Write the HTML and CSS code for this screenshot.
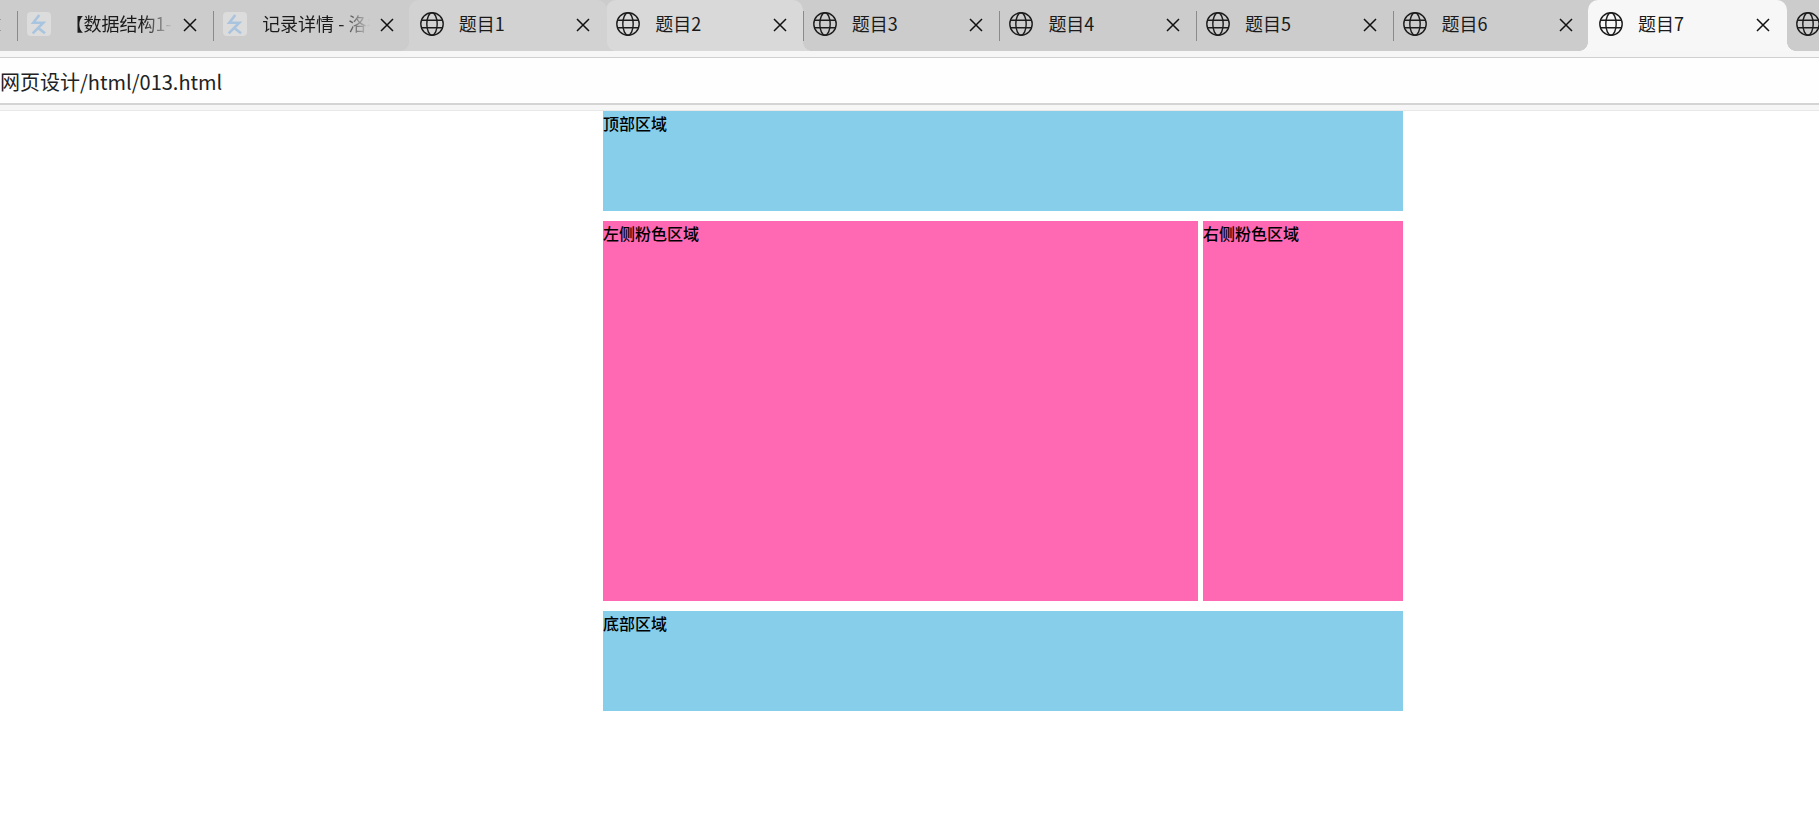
FILE: index.html
```html
<!DOCTYPE html>
<html lang="zh-CN">
<head>
<meta charset="utf-8">
<title>题目7</title>
<link rel="stylesheet" href="styles.css">
</head>
<body>
<svg class="defs" width="0" height="0" aria-hidden="true">
  <symbol id="globe" viewBox="0 0 24 24">
    <g fill="none" stroke="currentColor" stroke-width="1.4">
      <circle cx="12" cy="12" r="11.2"/>
      <ellipse cx="12" cy="12" rx="5.2" ry="11.2"/>
      <path d="M1.6 8.2h20.8M1.6 15.8h20.8"/>
    </g>
  </symbol>
  <symbol id="close" viewBox="0 0 14 14">
    <path d="M1 1l12 12M13 1L1 13" fill="none" stroke="currentColor" stroke-width="1.5"/>
  </symbol>
  <symbol id="fav" viewBox="0 0 24 24">
    <rect width="24" height="24" rx="4" fill="#dcdcdc"/>
    <path d="M12.3 3L6.3 10.7H16.3L5.7 21.3M10.3 15.3L18 21.3" fill="none" stroke="#a9c4de" stroke-width="2.6"/>
  </symbol>
</svg>

<header class="browser">
  <nav class="tabs">
    <div class="tab"><svg class="close push"><use href="#close"/></svg></div>
    <div class="tab sep"><svg class="icon"><use href="#fav"/></svg><span class="title fade">【数据结构1-2 作业</span><svg class="close"><use href="#close"/></svg></div>
    <div class="tab sep"><svg class="icon"><use href="#fav"/></svg><span class="title fade">记录详情 - 洛谷</span><svg class="close"><use href="#close"/></svg></div>
    <div class="tab hover-a"><svg class="icon"><use href="#globe"/></svg><span class="title">题目1</span><svg class="close"><use href="#close"/></svg></div>
    <div class="tab hover-b"><svg class="icon"><use href="#globe"/></svg><span class="title">题目2</span><svg class="close"><use href="#close"/></svg></div>
    <div class="tab sep"><svg class="icon"><use href="#globe"/></svg><span class="title">题目3</span><svg class="close"><use href="#close"/></svg></div>
    <div class="tab sep"><svg class="icon"><use href="#globe"/></svg><span class="title">题目4</span><svg class="close"><use href="#close"/></svg></div>
    <div class="tab sep"><svg class="icon"><use href="#globe"/></svg><span class="title">题目5</span><svg class="close"><use href="#close"/></svg></div>
    <div class="tab sep"><svg class="icon"><use href="#globe"/></svg><span class="title">题目6</span><svg class="close"><use href="#close"/></svg></div>
    <div class="tab active"><svg class="icon"><use href="#globe"/></svg><span class="title">题目7</span><svg class="close"><use href="#close"/></svg></div>
    <div class="tab"><svg class="icon"><use href="#globe"/></svg></div>
  </nav>
  <div class="toolbar">
    <div class="address">网页设计/html/013.html</div>
  </div>
</header>

<main class="page">
  <div class="band">顶部区域</div>
  <div class="middle">
    <div class="pink left">左侧粉色区域</div>
    <div class="pink right">右侧粉色区域</div>
  </div>
  <div class="band">底部区域</div>
</main>
</body>
</html>
```

FILE: styles.css
```css
* {
  box-sizing: border-box;
}

html,
body {
  margin: 0;
  height: 100%;
  overflow: hidden;
  background: #fff;
  font-family: "Noto Sans CJK SC", "Noto Sans", sans-serif;
  color: #000;
}

.defs {
  display: block;
  height: 0;
}

/* browser chrome */
.browser {
  height: 111px;
  display: flex;
  flex-direction: column;
  background: #f6f6f6;
  border-bottom: 1px solid #e8e8e8;
}

.tabs {
  height: 51px;
  flex: none;
  display: flex;
  margin-left: -180px;
  width: 2170px;
  background: #ccc;
}

.tab {
  --tab: #ccc;
  position: relative;
  flex: 0 0 196.57px;
  min-width: 0;
  height: 51px;
  display: flex;
  align-items: center;
  padding: 0 16px 3px 10px;
  background: var(--tab);
  font-size: 18px;
  line-height: 24px;
  color: #1a1a1a;
}

.tab.sep::before {
  content: "";
  position: absolute;
  left: 0;
  top: 11px;
  width: 1px;
  height: 30px;
  background: #8a8a8a;
  z-index: 3;
}

.tab.active,
.tab.hover-a,
.tab.hover-b {
  border-radius: 10px 10px 0 0;
}

.tab.active,
.tab.hover-a {
  flex-basis: 198.57px;
  margin: 0 -1px;
  padding: 0 17px 3px 11px;
  z-index: 2;
}

.tab.active {
  --tab: #f7f7f7;
}

.tab.hover-a {
  --tab: #d2d2d2;
}

.tab.hover-b {
  --tab: #d9d9d9;
  z-index: 1;
}

.tab.active::before,
.tab.active::after,
.tab.hover-a::before,
.tab.hover-a::after,
.tab.hover-b::after {
  content: "";
  position: absolute;
  bottom: 0;
  width: 9px;
  height: 9px;
}

.tab.active::before,
.tab.hover-a::before {
  left: -9px;
  background: radial-gradient(circle at 0 0, transparent 8.6px, var(--tab) 9.2px);
}

.tab.active::after,
.tab.hover-a::after,
.tab.hover-b::after {
  right: -9px;
  background: radial-gradient(circle at 100% 0, transparent 8.6px, var(--tab) 9.2px);
}

.icon {
  flex: none;
  width: 24px;
  height: 24px;
  margin-right: 15px;
  color: #1c1c1c;
}

.title {
  flex: 1 1 0;
  min-width: 0;
  overflow: hidden;
  white-space: nowrap;
  margin-top: -2px;
  padding-bottom: 1px;
}

.title.fade {
  margin-right: 10px;
  -webkit-mask-image: linear-gradient(90deg, #000 72%, transparent 100%);
  mask-image: linear-gradient(90deg, #000 72%, transparent 100%);
}

.close {
  flex: none;
  width: 14px;
  height: 14px;
  margin-top: 2px;
  color: #111;
}

.close.push {
  margin-left: auto;
}

/* address bar */
.toolbar {
  margin-top: 6px;
  height: 48px;
  flex: none;
  background: #fefefe;
  border-top: 1px solid #d0d0d0;
  border-bottom: 2px solid #d4d4d4;
}

.address {
  padding-top: 2px;
  font-size: 20px;
  line-height: 43px;
  color: #222;
  white-space: nowrap;
}

/* page content */
.page {
  width: 800px;
  margin: 0 0 0 603px;
  display: flex;
  flex-direction: column;
  gap: 10px;
  font-size: 16px;
  font-weight: 500;
  line-height: 24px;
}

.band {
  height: 100px;
  background: #87ceeb;
}

.middle {
  height: 380px;
  display: flex;
  gap: 5px;
}

.pink {
  background: #ff69b4;
}

.left {
  flex: 1;
}

.right {
  flex: 0 0 200px;
}
```
